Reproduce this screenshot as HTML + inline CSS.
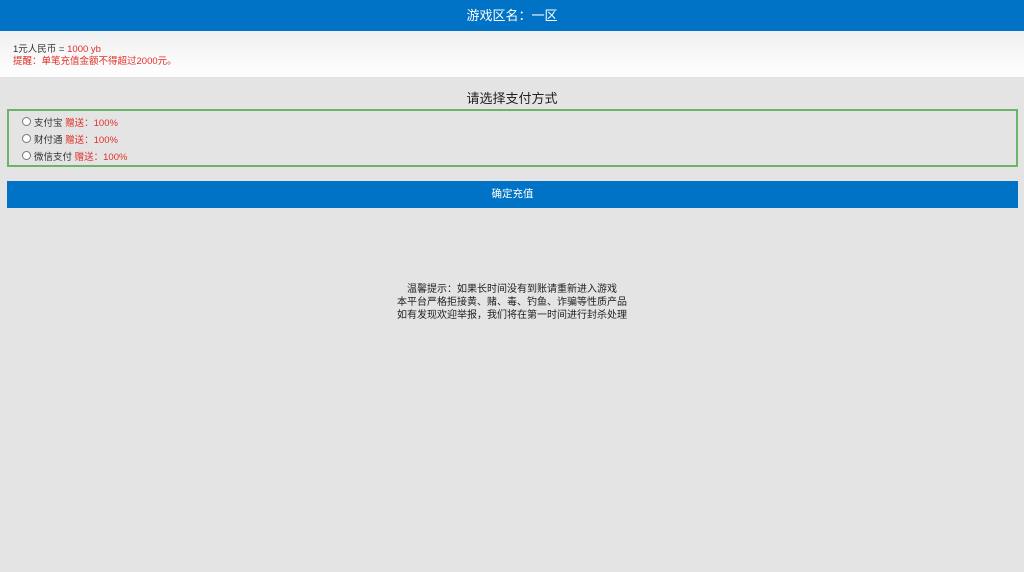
<!DOCTYPE html>
<html><head><meta charset="utf-8"><style>
body{margin:0;width:1024px;height:572px;background:#e4e4e4;font-family:"Liberation Sans","Noto Sans CJK SC",sans-serif;overflow:hidden;position:relative}
.top{height:31px;background:#0073c6;color:#fff;text-align:center;font-size:13px;line-height:31px}
.info{height:46px;background:linear-gradient(#f0f0f0,#fff);font-size:9.5px;line-height:12px;padding-left:13px;box-sizing:border-box;padding-top:42px;padding-top:12px;color:#333}
.info div:first-child{margin-top:1px}
.red{color:#e0302a}
.title{position:absolute;top:88px;width:100%;text-align:center;font-size:13px;color:#222}
.box{position:absolute;top:109px;left:7px;width:1007px;height:54px;border:2px solid #6cb36c;font-size:9.5px;color:#333}
.row{position:absolute;left:13px;height:12px;line-height:12px}
.rd{display:inline-block;width:7px;height:7px;border:1px solid #777;border-radius:50%;background:#fff;vertical-align:0px;margin-right:3px}
.btn{position:absolute;top:181px;left:7px;width:1011px;height:27px;background:#0073c6;color:#fff;text-align:center;line-height:27px;font-size:10.5px}
.tip{position:absolute;top:283px;width:100%;text-align:center;font-size:10px;line-height:13px;color:#222}
</style></head><body>
<div class="top">游戏区名：一区</div>
<div class="info"><div>1元人民币 = <span class="red">1000 yb</span></div><div class="red">提醒：单笔充值金额不得超过2000元。</div></div>
<div class="title">请选择支付方式</div>
<div class="box">
<div class="row" style="top:6px"><span class="rd"></span>支付宝 <span class="red">赠送：100%</span></div>
<div class="row" style="top:23px"><span class="rd"></span>财付通 <span class="red">赠送：100%</span></div>
<div class="row" style="top:40px"><span class="rd"></span>微信支付 <span class="red">赠送：100%</span></div>
</div>
<div class="btn">确定充值</div>
<div class="tip">温馨提示：如果长时间没有到账请重新进入游戏<br>本平台严格拒接黄、赌、毒、钓鱼、诈骗等性质产品<br>如有发现欢迎举报，我们将在第一时间进行封杀处理</div>
</body></html>
